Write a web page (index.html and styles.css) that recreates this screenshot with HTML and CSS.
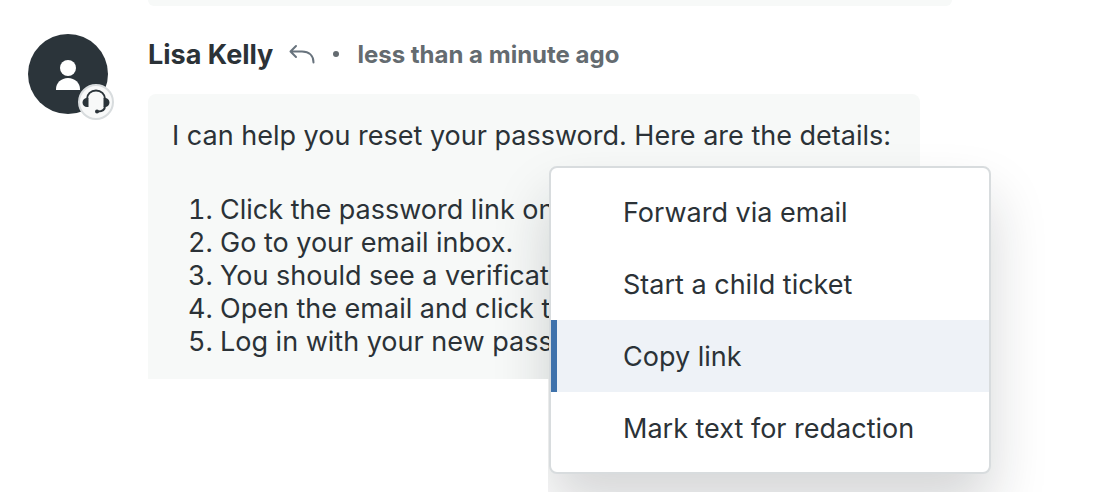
FILE: index.html
```
<!DOCTYPE html>
<html lang="en">
<head>
    <meta charset="UTF-8">
    <meta name="viewport" content="width=device-width, initial-scale=1.0">
    <title>Ticket conversation</title>
    <link rel="stylesheet" href="styles.css">
</head>
<body>
    <main class="conversation">
        <!-- End of the previous message -->
        <div class="previous"></div>

        <article class="message">
            <div class="avatar">
                <svg class="avatar-icon" viewBox="0 0 24 30" aria-hidden="true">
                    <circle cx="12" cy="8" r="8"/>
                    <path d="M0 30v-1c0-6 5-11 12-11s12 5 12 11v1z"/>
                </svg>
                <span class="badge">
                    <svg viewBox="0 0 28 28" aria-hidden="true">
                        <path class="band" d="M5 11C5 6 9 2.500 14 2.500S23 6 23 11"/>
                        <path class="band" d="M23 17.500c0 4-2.500 6-7 6"/>
                        <path d="M6.500 10v9H5a4.500 4.500 0 0 1 0-9zM21.500 10v9H23a4.500 4.500 0 0 0 0-9z"/>
                        <circle cx="15" cy="23.500" r="2"/>
                    </svg>
                </span>
            </div>

            <div class="content">
                <header class="meta">
                    <span class="author">Lisa Kelly</span>
                    <svg class="reply" viewBox="0 0 26 20" aria-hidden="true">
                        <path d="M7 2L1.500 7.500 7 13M1.500 7.500H13c7 0 11.500 4 11.500 11"/>
                    </svg>
                    <span class="dot"></span>
                    <time class="time">less than a minute ago</time>
                </header>

                <div class="bubble">
                    <p>I can help you reset your password. Here are the details:</p>
                    <ol>
                        <li>Click the password link on</li>
                        <li>Go to your email inbox.</li>
                        <li>You should see a verification</li>
                        <li>Open the email and click the</li>
                        <li>Log in with your new password</li>
                    </ol>
                </div>

                <!-- Message actions -->
                <div class="menu" role="menu">
                    <button class="menu-item" role="menuitem">Forward via email</button>
                    <button class="menu-item" role="menuitem">Start a child ticket</button>
                    <button class="menu-item active" role="menuitem">Copy link</button>
                    <button class="menu-item" role="menuitem">Mark text for redaction</button>
                </div>

                <div class="below"></div>
            </div>
        </article>
    </main>
</body>
</html>
```
FILE: styles.css
```
body {
    margin: 0;
    background: #fff;
    color: #2b3237;
    font-family: Inter, "Liberation Sans", sans-serif;
    font-size: 27px;
    line-height: 33px;
}

.conversation {
    display: flex;
    flex-direction: column;
    gap: 28px;
    min-height: 100vh;
    overflow: hidden;
}

.previous {
    height: 6px;
    max-width: 804px;
    margin-left: 148px;
    background: #f7f9f8;
    border-radius: 0 0 8px 8px;
}

.message {
    flex: 1;
    display: flex;
    gap: 40px;
    padding-left: 28px;
}

/* Avatar */
.avatar {
    position: relative;
    flex: none;
    display: flex;
    align-items: center;
    justify-content: center;
    width: 80px;
    height: 80px;
    border-radius: 50%;
    background: #2b343a;
}

.avatar-icon {
    width: 24px;
    height: 30px;
    margin-top: 2px;
    fill: #fff;
}

.badge {
    position: absolute;
    right: -6px;
    bottom: -6px;
    box-sizing: border-box;
    display: flex;
    align-items: center;
    justify-content: center;
    width: 36px;
    height: 36px;
    border: 2px solid #d8dcde;
    border-radius: 50%;
    background: #f8f9f9;
}

.badge svg {
    flex: none;
    width: 28px;
    height: 28px;
    fill: #2b343a;
}

.badge .band {
    fill: none;
    stroke: #2b343a;
    stroke-width: 2;
}

/* Message */
.content {
    position: relative;
    flex: 1;
    display: flex;
    flex-direction: column;
    align-items: flex-start;
}

.meta {
    display: flex;
    align-items: center;
    height: 40px;
    margin-bottom: 20px;
}

.author {
    font-weight: 700;
}

.reply {
    width: 26px;
    height: 20px;
    margin: 0 18px 0 16px;
    fill: none;
    stroke: #68737d;
    stroke-width: 2;
    stroke-linecap: round;
    stroke-linejoin: round;
}

.dot {
    width: 6px;
    height: 6px;
    margin-right: 18px;
    border-radius: 50%;
    background: #646b70;
}

.time {
    color: #646b70;
    font-size: 24px;
    font-weight: 700;
}

.bubble {
    box-sizing: border-box;
    width: 100%;
    max-width: 772px;
    padding: 25px 24px 21px;
    border-radius: 8px 8px 0 0;
    background: #f7f9f8;
}

.bubble p {
    margin: 0 0 41px;
}

.bubble ol {
    margin: 0;
    padding-left: 48px;
}

.below {
    position: relative;
    z-index: 2;
    flex: 1;
    width: 400px;
    background: #fff;
}

/* Menu */
.menu {
    position: absolute;
    z-index: 1;
    top: 132px;
    left: 401px;
    box-sizing: border-box;
    width: 442px;
    padding: 8px 0;
    border: 2px solid #d8dcde;
    border-radius: 8px;
    background: #fff;
    box-shadow: 0 32px 56px rgba(23, 30, 34, 0.18);
}

.menu-item {
    display: block;
    width: 100%;
    height: 72px;
    padding: 0 0 0 66px;
    border: 0;
    border-left: 6px solid transparent;
    background: none;
    color: inherit;
    font: inherit;
    text-align: left;
    cursor: pointer;
}

.menu-item.active {
    border-left-color: #3f72ab;
    background: #eef2f7;
}
```
